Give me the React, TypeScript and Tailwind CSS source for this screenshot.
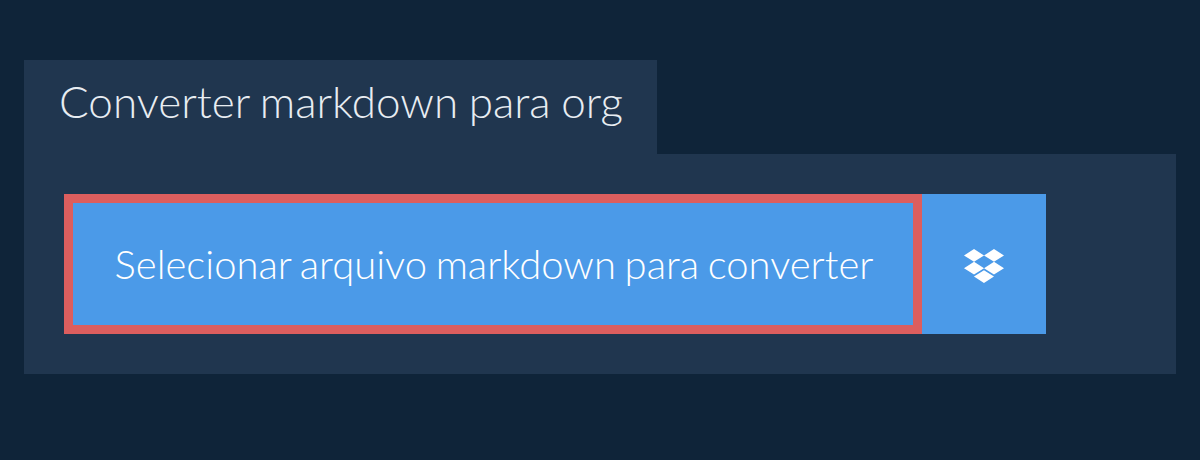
import React from "react";
import { FaDropbox } from "react-icons/fa";

export default function App() {
  return (
    <div className="w-[1200px] h-[460px] bg-[#0f2439] pt-[60px] px-6 font-['Lato',sans-serif] overflow-hidden">
      <div className="w-[633px] bg-[#20364f] h-[94px] pl-[35px] pt-[14px] text-[#e8edf2] text-[44px] leading-[54px] font-light whitespace-nowrap [word-spacing:-1.4px]">
        Converter markdown para org
      </div>
      <div className="bg-[#20364f] h-[220px] p-10">
        <div className="flex h-[140px]">
          <button className="w-[858px] h-full pl-[2px] bg-[#4b9ae8] border-[9px] border-[#dc5e5e] text-white text-[40px] font-light whitespace-nowrap [word-spacing:-2.2px]">
            Selecionar arquivo markdown para converter
          </button>
          <button className="w-[124px] h-full bg-[#4b9ae8] flex items-center justify-center text-white">
            <FaDropbox size={40} className="mt-1" />
          </button>
        </div>
      </div>
    </div>
  );
}
